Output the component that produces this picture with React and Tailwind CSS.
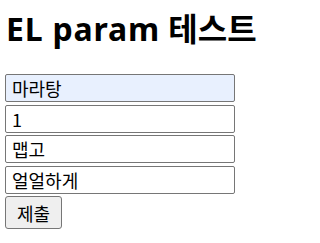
import React from 'react';

const FIELDS = [
  { name: 'food', value: '마라탕', autofill: true },
  { name: 'count', value: '1' },
  { name: 'taste', value: '맵고' },
  { name: 'mood', value: '얼얼하게' },
];

export default function App() {
  return (
    <div className="bg-white w-[277px] h-[243px] overflow-hidden px-[5px] text-black font-['Noto_Sans','Noto_Sans_CJK_KR',sans-serif]">
      <h1 className="pt-[8px] text-[32px] leading-[42px] font-bold pl-[1px] whitespace-nowrap">
        <span className="tracking-[0.8px]">EL param</span> 테스트
      </h1>

      <form className="mt-[24px] flex flex-col items-start gap-[2.5px]" onSubmit={(e) => e.preventDefault()}>
        {FIELDS.map((f) => (
          <input
            key={f.name}
            name={f.name}
            defaultValue={f.value}
            className={`w-[230px] h-[28px] border border-[#767676] rounded-[2px] px-[6px] text-[18px] leading-none text-black outline-none font-['Noto_Sans_CJK_KR',sans-serif] ${
              f.autofill ? 'bg-[#e8f0fe]' : 'bg-white'
            }`}
          />
        ))}
        <button
          type="submit"
          className="h-[33px] w-[57px] border border-[#767676] rounded-[3px] bg-[#efefef] text-[18px] leading-none text-black font-['Noto_Sans_CJK_KR',sans-serif]"
        >
          제출
        </button>
      </form>
    </div>
  );
}
